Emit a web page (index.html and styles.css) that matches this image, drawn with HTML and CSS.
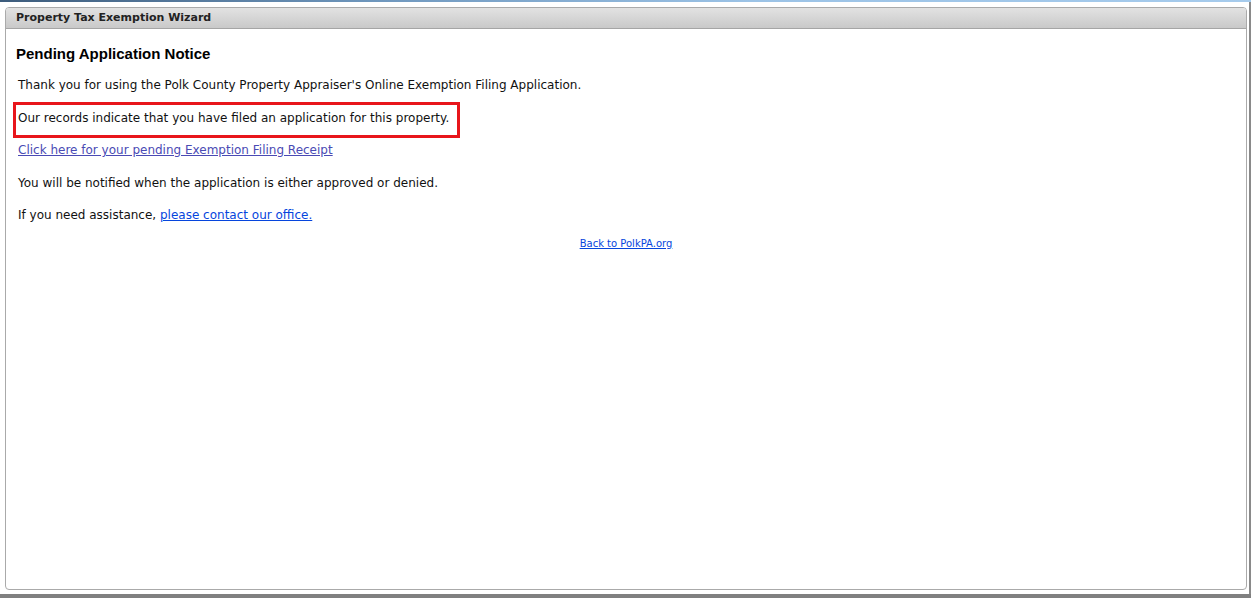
FILE: index.html
```html
<!DOCTYPE html>
<html>
<head>
<meta charset="utf-8">
<link rel="stylesheet" href="styles.css">
</head>
<body>
<div class="topbar"></div>
<div class="frame">
  <div class="panel">
    <div class="panel-header">Property Tax Exemption Wizard</div>
    <div class="panel-body">
      <h2 class="title">Pending Application Notice</h2>
      <p class="line first">Thank you for using the Polk County Property Appraiser's Online Exemption Filing Application.</p>
      <div class="notice"><p class="line">Our records indicate that you have filed an application for this property.</p></div>
      <p class="line after-notice"><a class="receipt" href="#">Click here for your pending Exemption Filing Receipt</a></p>
      <p class="line spaced">You will be notified when the application is either approved or denied.</p>
      <p class="line spaced-16">If you need assistance, <a class="contact" href="#">please contact our office.</a></p>
      <div class="back"><a class="contact" href="#">Back to PolkPA.org</a></div>
    </div>
  </div>
</div>
<div class="bottombar"></div>
</body>
</html>
```
FILE: styles.css
```css
html, body {
  margin: 0;
  padding: 0;
  height: 598px;
  overflow: hidden;
  background: #fff;
}
body {
  display: flex;
  flex-direction: column;
  font-family: "DejaVu Sans", sans-serif;
}
.topbar {
  height: 2px;
  background: linear-gradient(to right, #3d5c7c 0%, #6f97bd 30%, #9cc3e6 60%, #a6cbec 100%);
}
.frame {
  flex: 1;
  display: flex;
  padding: 5px 2px 4px 5px;
  border-right: 2px solid #8a8a8a;
  min-height: 0;
}
.panel {
  flex: 1;
  display: flex;
  flex-direction: column;
  border: 1px solid #aaaaaa;
  border-radius: 4px;
  overflow: hidden;
}
.panel-header {
  height: 20px;
  line-height: 20px;
  padding-left: 10px;
  font-weight: bold;
  font-size: 11px;
  color: #222;
  background: linear-gradient(to bottom, #e2e2e2, #c9c9c9);
  border-bottom: 1px solid #a5a5a5;
}
.panel-body {
  flex: 1;
  padding: 16px 10px 0 10px;
}
.title {
  margin: 0;
  height: 18px;
  line-height: 18px;
  font-family: "Liberation Sans", Arial, sans-serif;
  font-weight: bold;
  font-size: 15px;
  color: #000;
}
.line {
  margin: 0;
  padding: 0 2px;
  font-size: 12px;
  line-height: 16px;
  color: #111;
}
.first {
  margin-top: 14px;
}
.notice {
  width: 441px;
  margin: 9px 0 0 -3px;
  padding: 5px 0 9px 0;
  border: 3px solid #e8151b;
}
.after-notice {
  margin-top: 4px;
}
.spaced {
  margin-top: 17px;
}
.spaced-16 {
  margin-top: 16px;
}
.receipt {
  color: #4a4ab4;
}
.contact {
  color: #0645dd;
}
.back {
  margin-top: 14px;
  text-align: center;
  font-size: 10px;
  line-height: 13px;
}
.bottombar {
  height: 4px;
  background: #808080;
}
```
